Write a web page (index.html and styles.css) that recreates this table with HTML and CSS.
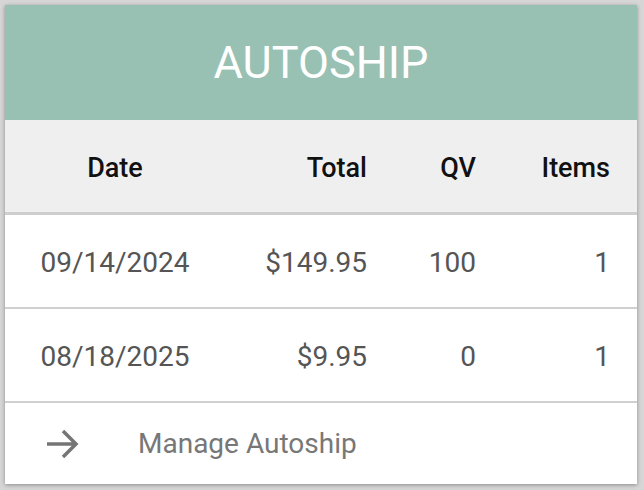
FILE: index.html
```html
<!DOCTYPE html>
<html>
<head>
<meta charset="utf-8">
<link rel="stylesheet" href="styles.css">
</head>
<body>
<div class="card">
  <div class="title">AUTOSHIP</div>
  <div class="row head">
    <div class="c1">Date</div>
    <div class="c2">Total</div>
    <div class="c3">QV</div>
    <div class="c4">Items</div>
  </div>
  <div class="row data">
    <div class="c1">09/14/2024</div>
    <div class="c2">$149.95</div>
    <div class="c3">100</div>
    <div class="c4">1</div>
  </div>
  <div class="row data">
    <div class="c1">08/18/2025</div>
    <div class="c2">$9.95</div>
    <div class="c3">0</div>
    <div class="c4">1</div>
  </div>
  <div class="footer">
    <svg class="arrow" width="36" height="32" viewBox="0 0 36 32">
      <path d="M3 16 H32 M19 3 L32 16 L19 29" fill="none" stroke="#757575" stroke-width="3.5"/>
    </svg>
    <span class="link">Manage Autoship</span>
  </div>
</div>
</body>
</html>
```
FILE: styles.css
```css
html, body {
  margin: 0;
  padding: 0;
}
body {
  background: #d6d6d6;
  font-family: Roboto, "Liberation Sans", sans-serif;
  padding: 5px 7px 6px 5px;
}
.card {
  width: 632px;
  height: 479px;
  background: #fff;
  box-shadow: 0 1px 4px rgba(0,0,0,0.35);
  display: flex;
  flex-direction: column;
}
.title {
  height: 115px;
  background: #98c1b4;
  color: #fff;
  font-size: 45px;
  display: flex;
  align-items: center;
  justify-content: center;
  box-sizing: border-box;
}
.row {
  display: grid;
  grid-template-columns: 220px 142px 109px 134px;
  padding-right: 27px;
  padding-top: 3px;
  box-sizing: border-box;
  align-items: center;
  font-size: 28px;
}
.head {
  height: 95px;
  background: #efefef;
  border-bottom: 3px solid #cecece;
  color: #111;
  font-weight: 500;
  font-size: 27px;
}
.data {
  height: 94px;
  border-bottom: 2px solid #d0d0d0;
  color: #555;
}
.c1 { text-align: center; }
.c2, .c3, .c4 { text-align: right; }
.footer {
  flex: 1;
  display: flex;
  align-items: center;
  padding-left: 39px;
}
.arrow {
  margin-right: 58px;
}
.link {
  font-size: 28px;
  color: #777;
}
```
